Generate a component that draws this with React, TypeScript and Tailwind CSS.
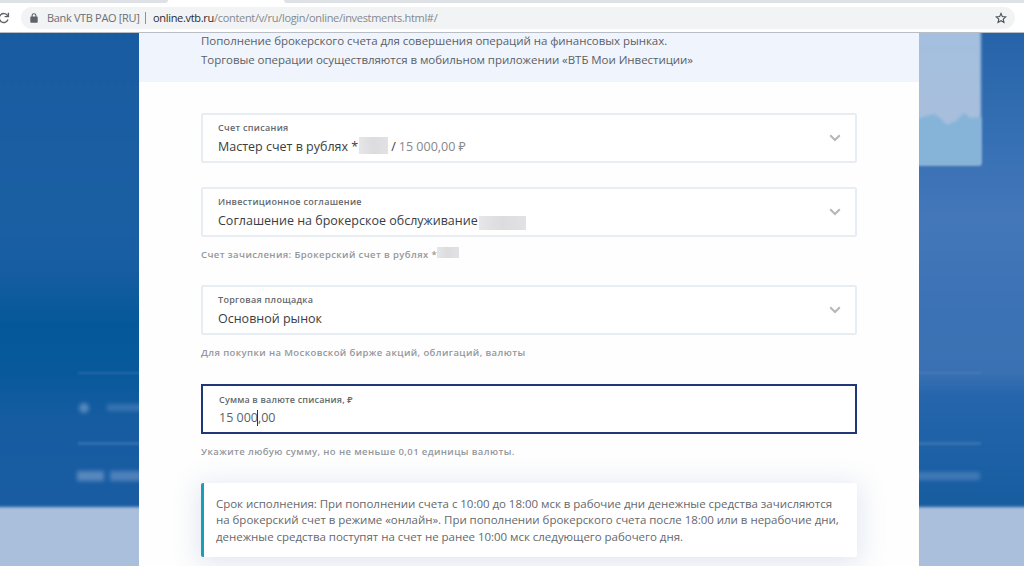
import type { ReactNode } from "react";
import clsx from "clsx";

function Redacted({ className }: { className: string }) {
  return (
    <span
      className={clsx("inline-block shrink-0 bg-linear-to-r from-[#e6e6e8] via-[#dcdcde] to-[#e2e2e4]", className)}
      aria-hidden
    />
  );
}

function Chevron() {
  return (
    <svg className="h-[8px] w-[12px] shrink-0" viewBox="0 0 12 8" fill="none" stroke="#b4b7bb" strokeWidth="2">
      <path d="M1.2 1.2 6 6l4.800-4.800" />
    </svg>
  );
}

function SelectField({ label, children }: { label: string; children: ReactNode }) {
  return (
    <div className="flex h-[50px] items-center justify-between rounded-[2px] border-2 border-[#e8edf3] bg-white pr-[14px] pl-[15px]">
      <div className="pt-px">
        <div className="text-[9px] leading-[12px] font-semibold tracking-[0.3px] whitespace-nowrap text-[#64676c]">{label}</div>
        <div className="mt-[4px] flex h-[18px] items-center text-[12.500px] leading-[18px] whitespace-nowrap text-[#3a3d42]">
          {children}
        </div>
      </div>
      <Chevron />
    </div>
  );
}

function Hint({ children, className }: { children: ReactNode; className?: string }) {
  return (
    <div className={clsx("flex h-[14px] text-[9.5px] leading-[14px] font-semibold tracking-[0.390px] whitespace-nowrap text-[#94979c]", className)}>
      {children}
    </div>
  );
}

function BrowserBar() {
  return (
    <header className="relative z-10 h-[33px] border-b border-[#b9bdc4] bg-white">
      <div className="flex h-[3px] justify-between bg-white">
        <div className="w-[168px] rounded-br-[3px] bg-[#dee1e6]" />
        <div className="w-[740px] rounded-bl-[3px] bg-[#dee1e6]" />
      </div>
      <div className="mt-[4px] flex h-[22px] items-center">
        <svg className="h-[12px] w-[10px] shrink-0" viewBox="0 0 10 12" fill="none" stroke="#5f6368" strokeWidth="1.400">
          <path d="M7.700 3.800A4.500 4.500 0 1 0 8 7.600" />
          <path d="M8.400 0.800V4.600H4.600" />
        </svg>
        <div className="ml-[11px] flex h-[22px] w-[994px] items-center rounded-full bg-[#f1f3f4] pr-[8px] pl-[9px] text-[11px] whitespace-nowrap">
          <svg className="h-[10px] w-[8px] shrink-0" viewBox="0 0 8 10">
            <rect x="0.300" y="3.600" width="7.400" height="6.200" rx="0.800" fill="#5f6368" />
            <path d="M2.100 4V2.600a1.900 1.900 0 0 1 3.800 0V4" fill="none" stroke="#5f6368" strokeWidth="1.100" />
          </svg>
          <span className="ml-[9px] w-[98px] tracking-[-0.340px] text-[#6b6f74]">Bank VTB PAO [RU]</span>
          <span className="h-[12px] w-px bg-[#8d9196]" />
          <span className="ml-[7px] tracking-[-0.310px] text-[#85898e]">
            <span className="text-[#2a2c2f]">online.vtb.ru</span>/content/v/ru/login/online/investments.html#/
          </span>
          <svg
            className="ml-auto h-[12px] w-[12px]"
            viewBox="0 0 24 24"
            fill="none"
            stroke="#4b4f54"
            strokeWidth="2.200"
            strokeLinejoin="miter"
          >
            <path d="m12 3 2.700 6.200 6.800.6-5.100 4.500 1.500 6.600-5.900-3.500-5.900 3.500 1.500-6.600-5.100-4.500 6.800-.6z" />
          </svg>
        </div>
      </div>
    </header>
  );
}

/* Out-of-focus page behind the dialog */
function Backdrop() {
  return (
    <div className="absolute inset-0 overflow-hidden bg-[#a9bfdb]" aria-hidden>
      <div className="absolute -inset-x-2 -top-2 h-[482px] overflow-hidden blur-[1.5px]">
        <div className="absolute inset-y-0 left-0 w-1/2 bg-[linear-gradient(180deg,#195ba0_0%,#1b5fa3_40%,#175da1_50%,#045899_62%,#07599b_72%,#165ca1_82%,#195ca2_100%)]" />
        <div className="absolute inset-y-0 right-0 w-1/2 bg-[linear-gradient(180deg,#2562a8_0%,#3670b4_24%,#4377b9_40%,#3b72b5_60%,#3a71b3_72%,#2565ab_77%,#1c60a5_90%,#185ca0_100%)]" />
      </div>
      <div className="absolute top-[-10px] left-[880px] h-[142px] w-[101px] bg-linear-to-b from-[#a3bfdf] to-[#a9bfda] blur-[1.5px]" />
      <svg className="absolute top-[76px] left-[880px] h-[57px] w-[101px] blur-[1.5px]" viewBox="0 0 101 57">
        <path fill="#86b3d8" d="M0 10 38 10 46 7 54 5 60 9 67 16 76 12 84 4 90 9 101 8V56H0z" />
      </svg>
      <div className="absolute top-[339px] left-[78px] h-[2px] w-[903px] bg-[#5f8dc4]/35 blur-[1px]" />
      <div className="absolute top-[409px] left-[78px] h-[3px] w-[903px] bg-[#5f8dc4]/40 blur-[1px]" />
      <div className="absolute top-[370px] left-[79px] h-[10px] w-[10px] rounded-full bg-[#85a9d2]/60 blur-[2px]" />
      <div className="absolute top-[371px] left-[107px] h-[7px] w-[40px] bg-[#6f9bcc]/40 blur-[2px]" />
      <div className="absolute top-[438px] left-[77px] flex gap-[6px] blur-[2px]">
        <div className="h-[10px] w-[27px] bg-[#7a9fce]/65" />
        <div className="h-[10px] w-[40px] bg-[#7a9fce]/55" />
      </div>
      <div className="absolute top-[439px] left-[910px] h-[8px] w-[70px] bg-[#6c9bcb]/45 blur-[2px]" />
    </div>
  );
}

export default function App() {
  return (
    <div className="flex h-[566px] w-[1024px] flex-col overflow-hidden font-['Open_Sans','Noto_Sans',sans-serif]">
      <BrowserBar />
      <div className="relative min-h-0 flex-1">
        <Backdrop />
        <main className="relative ml-[139px] h-full w-[780px] overflow-hidden bg-[#fefefe]">
          <section className="flex h-[49px] flex-col bg-[#eff4fd] pl-[62px] text-[11.500px] leading-[18.500px] tracking-[-0.050px] whitespace-nowrap text-[#5b5f66]">
            <p className="-mt-px">Пополнение брокерского счета для совершения операций на финансовых рынках.</p>
            <p>Торговые операции осуществляются в мобильном приложении «ВТБ Мои Инвестиции»</p>
          </section>

          <form className="flex w-[718px] flex-col pt-[31px] pl-[62px]">
            <SelectField label="Счет списания">
              <span>Мастер счет в рублях *</span>
              <Redacted className="mb-[2px] ml-px h-[17px] w-[29px]" />
              <span className="ml-[3px]">/</span>
              <span className="ml-[3px] text-[#85888e]">15 000,00 ₽</span>
            </SelectField>

            <div className="mt-[24px]">
              <SelectField label="Инвестиционное соглашение">
                <span>Соглашение на брокерское обслуживание</span>
                <Redacted className="mt-[4px] ml-px h-[14px] w-[47px]" />
              </SelectField>
            </div>
            <Hint className="mt-[11px]">
              Счет зачисления: Брокерский счет в рублях *
              <Redacted className="-mt-px h-[11px] w-[22px]" />
            </Hint>

            <div className="mt-[23px]">
              <SelectField label="Торговая площадка">Основной рынок</SelectField>
            </div>
            <Hint className="mt-[11px]">Для покупки на Московской бирже акций, облигаций, валюты</Hint>

            <div className="mt-[24px] h-[50px] border-2 border-[#203878] bg-white pt-[8px] pl-[16px]">
              <div className="text-[9px] leading-[12px] font-semibold tracking-[0.180px] text-[#64676c]">
                Сумма в валюте списания, ₽
              </div>
              <div className="mt-[3px] flex items-center text-[12.500px] leading-[18px] text-[#5b5f66]">
                15 000
                <span className="-mr-px h-[16px] w-px -translate-x-px bg-[#303338]" />
                ,00
              </div>
            </div>
            <Hint className="mt-[11px]">Укажите любую сумму, но не меньше 0,01 единицы валюты.</Hint>

            <div className="mt-[24px] h-[74px] rounded-[2px] border-l-[3px] border-[#1b9cb8] bg-white pt-[13px] pl-[12px] text-[11.500px] leading-[16.400px] tracking-[-0.030px] whitespace-nowrap text-[#65686d] shadow-[0_4px_26px_4px_rgba(90,125,180,0.17)]">
              <p>Срок исполнения: При пополнении счета с 10:00 до 18:00 мск в рабочие дни денежные средства зачисляются</p>
              <p>на брокерский счет в режиме «онлайн». При пополнении брокерского счета после 18:00 или в нерабочие дни,</p>
              <p>денежные средства поступят на счет не ранее 10:00 мск следующего рабочего дня.</p>
            </div>
          </form>
        </main>
      </div>
    </div>
  );
}
